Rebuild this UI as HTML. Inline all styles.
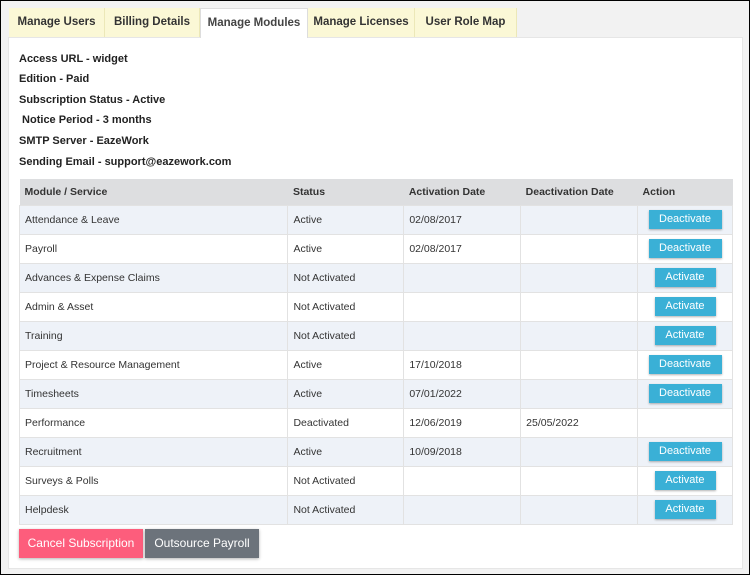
<!DOCTYPE html>
<html><head><style>
*{box-sizing:border-box;margin:0;padding:0}
body{width:750px;height:575px;background:#f2f2f2;font-family:"Liberation Sans",sans-serif;position:relative;overflow:hidden;border:1px solid #000}
.tab{position:absolute;top:7px;height:29px;background:#fbf8d6;border-right:1px solid #ece8b8;font-size:11.5px;font-weight:bold;color:#333;text-align:center;line-height:29px}
.tab.act{background:#fff;border:1px solid #ddd;border-bottom:none;color:#444}
.panel{position:absolute;left:7px;top:36px;width:735px;height:532px;background:#fff;border:1px solid #e6e6e6}
.info{position:absolute;left:18px;font-size:11px;font-weight:bold;color:#222}
table{position:absolute;left:18px;top:178px;width:714px;border-collapse:collapse;font-size:10.5px;color:#333}
th{background:#dddee0;text-align:left;font-weight:bold;height:26px;padding-left:5px;color:#333}
td{border:1px solid #e2e2e2;padding-left:5px;height:29px;vertical-align:middle}
tr:nth-child(even) td{background:#eef2f8}
td.a{text-align:center;padding-left:0}
.b{display:inline-block;background:#3ab0d6;color:#fff;font-size:11px;height:19px;line-height:19px;box-shadow:0 1px 2px rgba(0,0,0,.3)}
.d{width:73px}.ac{width:61px}
.bb{position:absolute;top:528px;height:29px;line-height:29px;color:#fff;font-size:12px;text-align:center;box-shadow:0 1px 3px rgba(0,0,0,.3)}
</style></head><body>
<div class="tab" style="left:8px;width:96px">Manage Users</div>
<div class="tab" style="left:104px;width:95px">Billing Details</div>
<div class="tab" style="left:307px;width:107px">Manage Licenses</div>
<div class="tab" style="left:414px;width:102px">User Role Map</div>
<div class="panel"></div>
<div class="tab act" style="left:199px;width:108px;height:30px">Manage Modules</div>
<div class="info" style="top:52px">Access URL - widget</div>
<div class="info" style="top:72px">Edition - Paid</div>
<div class="info" style="top:93px">Subscription Status - Active</div>
<div class="info" style="top:113px">&nbsp;Notice Period - 3 months</div>
<div class="info" style="top:134px">SMTP Server - EazeWork</div>
<div class="info" style="top:155px">Sending Email - support@eazework.com</div>
<table>
<colgroup><col style="width:269px"><col style="width:116px"><col style="width:117px"><col style="width:117px"><col style="width:95px"></colgroup>
<tr><th>Module / Service</th><th>Status</th><th>Activation Date</th><th>Deactivation Date</th><th>Action</th></tr>
<tr><td>Attendance &amp; Leave</td><td>Active</td><td>02/08/2017</td><td></td><td class="a"><span class="b d">Deactivate</span></td></tr>
<tr><td>Payroll</td><td>Active</td><td>02/08/2017</td><td></td><td class="a"><span class="b d">Deactivate</span></td></tr>
<tr><td>Advances &amp; Expense Claims</td><td>Not Activated</td><td></td><td></td><td class="a"><span class="b ac">Activate</span></td></tr>
<tr><td>Admin &amp; Asset</td><td>Not Activated</td><td></td><td></td><td class="a"><span class="b ac">Activate</span></td></tr>
<tr><td>Training</td><td>Not Activated</td><td></td><td></td><td class="a"><span class="b ac">Activate</span></td></tr>
<tr><td>Project &amp; Resource Management</td><td>Active</td><td>17/10/2018</td><td></td><td class="a"><span class="b d">Deactivate</span></td></tr>
<tr><td>Timesheets</td><td>Active</td><td>07/01/2022</td><td></td><td class="a"><span class="b d">Deactivate</span></td></tr>
<tr><td style="height:27px">Performance</td><td>Deactivated</td><td>12/06/2019</td><td>25/05/2022</td><td></td></tr>
<tr><td>Recruitment</td><td>Active</td><td>10/09/2018</td><td></td><td class="a"><span class="b d">Deactivate</span></td></tr>
<tr><td>Surveys &amp; Polls</td><td>Not Activated</td><td></td><td></td><td class="a"><span class="b ac">Activate</span></td></tr>
<tr><td>Helpdesk</td><td>Not Activated</td><td></td><td></td><td class="a"><span class="b ac">Activate</span></td></tr>
</table>
<div class="bb" style="left:18px;width:124px;background:#fd5d7c">Cancel Subscription</div>
<div class="bb" style="left:144px;width:114px;background:#6c737b">Outsource Payroll</div>
</body></html>
